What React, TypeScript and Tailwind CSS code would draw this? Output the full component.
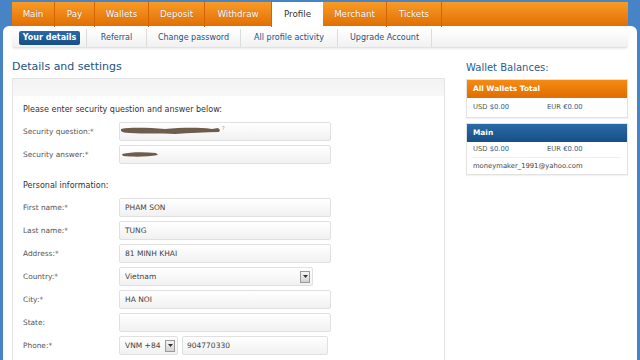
import React from 'react';

const tabs = [
  { label: 'Main', w: 'w-[43px]' },
  { label: 'Pay', w: 'w-[40px]' },
  { label: 'Wallets', w: 'w-[54px]' },
  { label: 'Deposit', w: 'w-[56px]' },
  { label: 'Withdraw', w: 'w-[67px]' },
  { label: 'Profile', w: 'w-[51px]', active: true },
  { label: 'Merchant', w: 'w-[64px]' },
  { label: 'Tickets', w: 'w-[55px]' },
];

const subTabs = [
  { label: 'Referral', w: 'w-[60px]' },
  { label: 'Change password', w: 'w-[94px]' },
  { label: 'All profile activity', w: 'w-[97px]' },
  { label: 'Upgrade Account', w: 'w-[94px]' },
];

const inputCls =
  'relative h-[19px] border border-[#e0e0e0] rounded-[2px] bg-gradient-to-b from-white to-[#f1f1f1] flex items-center text-[7.5px] text-[#444]';

const Field: React.FC<{ label: string; value?: string; children?: React.ReactNode }> = ({ label, value, children }) => (
  <div className="flex items-center h-[23px]">
    <span className="w-[96px] text-[7.4px] text-[#555]">{label}</span>
    {children ?? <div className={`${inputCls} w-[212px] px-[5px]`}>{value}</div>}
  </div>
);

const DropBtn: React.FC = () => (
  <div className="w-[10px] h-[12px] border border-[#9a9a9a] bg-gradient-to-b from-[#f4f4f4] to-[#d4d4d4] flex items-center justify-center">
    <svg width="5" height="3" viewBox="0 0 5 3"><path d="M0 0h5L2.5 3z" fill="#333" /></svg>
  </div>
);

const Amounts: React.FC = () => (
  <>
    <span className="w-[74px] text-[#555]">USD <span className="text-[#2b5d8e]">$0.00</span></span>
    <span className="text-[#555]">EUR <span className="text-[#2b5d8e]">€0.00</span></span>
  </>
);

const App: React.FC = () => {
  return (
    <div className="w-[640px] h-[360px] overflow-hidden bg-[#4784c6] font-['DejaVu_Sans',sans-serif] text-[8px]">
      {/* Top tabs */}
      <div className="pt-[2px] px-[12px]">
        <nav className="flex h-[25px] bg-gradient-to-b from-[#f99b25] to-[#e06d00]">
          {tabs.map((t) =>
            t.active ? (
              <div key={t.label} className={`${t.w} shrink-0 bg-white flex items-center justify-center text-[8.7px] text-[#333]`}>
                {t.label}
              </div>
            ) : (
              <div
                key={t.label}
                className={`${t.w} shrink-0 flex items-center justify-center text-[8.7px] text-white border-r border-[#d46300] [text-shadow:0_0_1px_rgba(0,0,0,0.3)]`}
              >
                {t.label}
              </div>
            )
          )}
        </nav>
      </div>

      {/* White body */}
      <div className="mx-[3px] -mt-px h-[400px] bg-white rounded-t-[6px]">
        {/* Sub navigation */}
        <div className="mx-[9px] pt-[3px]">
          <div className="flex items-center h-[19px] bg-gradient-to-b from-white to-[#f1f1f1] border-b border-[#e2e2e2] shadow-[0_1px_2px_rgba(0,0,0,0.08)] rounded-b-[3px]">
            <div className="w-[75px] shrink-0 flex items-center pl-[7px] border-r border-[#dcdcdc] h-full">
              <div className="w-[61px] h-[14px] rounded-[2px] bg-gradient-to-b from-[#2a6aa8] to-[#174f86] text-white font-semibold flex items-center justify-center">
                Your details
              </div>
            </div>
            {subTabs.map((s) => (
              <div key={s.label} className={`${s.w} shrink-0 h-full flex items-center justify-center border-r border-[#dcdcdc] text-[#1f5286]`}>
                {s.label}
              </div>
            ))}
          </div>
        </div>

        {/* Content */}
        <div className="flex pl-[9px] pt-[11px]">
          {/* Left column */}
          <div className="w-[433px] shrink-0">
            <h2 className="mt-[1px] text-[11px] text-[#1d5285] leading-[14px] pb-[4px]">Details and settings</h2>
            <div className="border-t border-l border-r border-[#e4e4e4] h-[300px]">
              <div className="h-[17px] bg-gradient-to-b from-[#f3f3f3] to-[#f8f8f8]" />
              <div className="pl-[10px] pt-[4px]">
                <p className="h-[20px] flex items-center text-[#333]">Please enter security question and answer below:</p>
                <Field label="Security question:*">
                  <div className={`${inputCls} w-[212px]`}>
                    <svg className="absolute left-0 top-[3px]" width="110" height="10" viewBox="0 0 110 10">
                      <path d="M1 3 C12 1 30 2 45 3 C60 2 75 1 92 3 L98 2 L100 4 L99 6 C85 6 70 7 55 8 C40 7 25 8 10 7 C5 7 2 6 1 5 Z" fill="#6e5c4c" />
                      <text x="102" y="4" fontSize="5" fill="#888">?</text>
                    </svg>
                  </div>
                </Field>
                <Field label="Security answer:*">
                  <div className={`${inputCls} w-[212px]`}>
                    <svg className="absolute left-[1px] top-[5px]" width="40" height="8" viewBox="0 0 40 8">
                      <path d="M1 3 C10 1 22 1 35 2 L37 4 C26 6 12 6 2 5 Z" fill="#6e5c4c" />
                    </svg>
                  </div>
                </Field>
                <p className="h-[20px] mt-[10px] flex items-center text-[#333]">Personal information:</p>
                <Field label="First name:*" value="PHAM SON" />
                <Field label="Last name:*" value="TUNG" />
                <Field label="Address:*" value="81 MINH KHAI" />
                <Field label="Country:*">
                  <div className={`${inputCls} w-[194px] justify-between pl-[5px] pr-[2px] border-[#d4d4d4]`}>
                    Vietnam
                    <DropBtn />
                  </div>
                </Field>
                <Field label="City:*" value="HA NOI" />
                <Field label="State:" value="" />
                <Field label="Phone:*">
                  <div className="flex gap-[4px]">
                    <div className={`${inputCls} w-[59px] justify-between pl-[5px] pr-[2px] border-[#d4d4d4]`}>
                      VNM +84
                      <DropBtn />
                    </div>
                    <div className={`${inputCls} w-[146px] px-[4px]`}>904770330</div>
                  </div>
                </Field>
              </div>
            </div>
          </div>

          {/* Right column */}
          <div className="ml-[21px] w-[162px] shrink-0">
            <h3 className="mt-[2px] text-[10px] text-[#2a5d92] leading-[14px] mb-[4px]">Wallet Balances:</h3>
            <div className="border border-[#e2e2e2] shadow-[0_1px_1px_rgba(0,0,0,0.05)]">
              <div className="h-[18px] bg-gradient-to-b from-[#f58b12] to-[#e06d00] text-white text-[7.4px] font-bold flex items-center px-[6px]">
                All Wallets Total
              </div>
              <div className="h-[19px] flex items-center px-[6px] text-[6.8px]">
                <Amounts />
              </div>
            </div>
            <div className="mt-[5px] border border-[#e2e2e2] shadow-[0_1px_1px_rgba(0,0,0,0.05)]">
              <div className="h-[18px] bg-gradient-to-b from-[#2a6aa8] to-[#174f86] text-white text-[7.4px] font-bold flex items-center px-[6px]">
                Main
              </div>
              <div className="mx-[6px] h-[16px] flex items-center text-[6.8px] border-b border-[#eeeeee]">
                <Amounts />
              </div>
              <div className="h-[16px] flex items-center px-[6px] text-[6.8px] text-[#444]">moneymaker_1991@yahoo.com</div>
            </div>
          </div>
        </div>
      </div>
    </div>
  );
};

export default App;
